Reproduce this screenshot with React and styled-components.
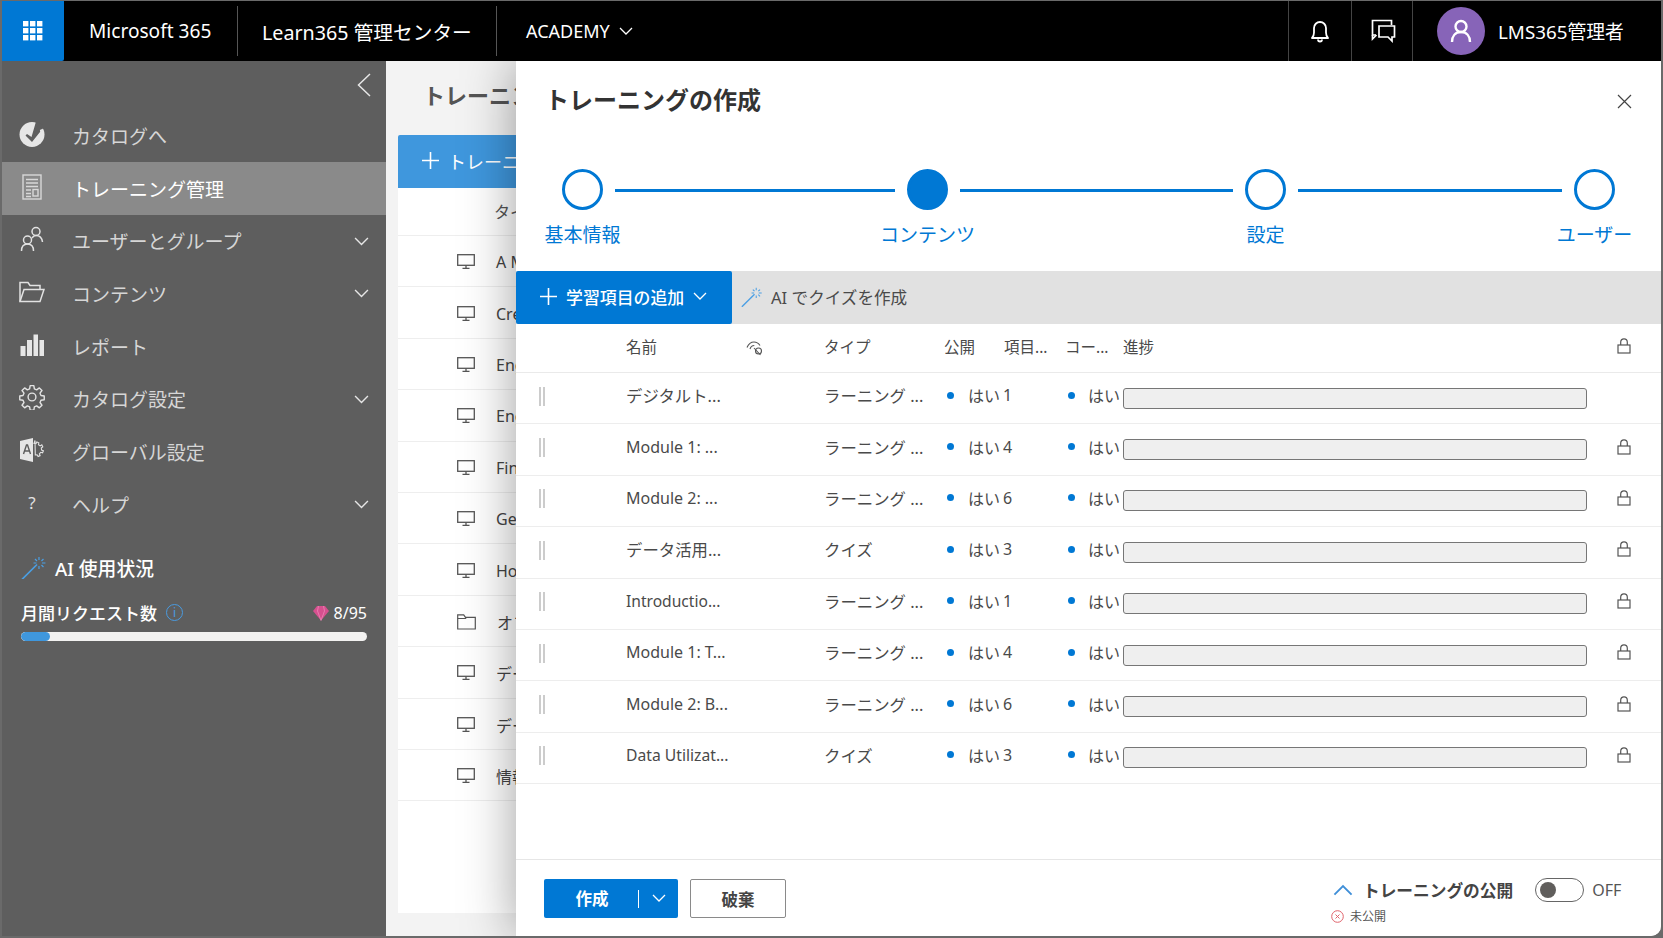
import React from "react";
import styled, { createGlobalStyle } from "styled-components";

const FONT = `"Noto Sans", "Noto Sans CJK JP", sans-serif`;

const Global = createGlobalStyle`
  html, body { margin: 0; padding: 0; height: 100%; background: #6a6a6a; overflow: hidden; }
  body { font-family: ${FONT}; }
  * { box-sizing: border-box; }
`;

const Page = styled.div`
  height: 938px;
  padding: 1px 2px 2px 2px;
  display: flex;
`;
const Win = styled.div`
  flex: 1;
  display: flex;
  flex-direction: column;
  overflow: hidden;
  border-bottom-right-radius: 10px;
  background: #f3f3f3;
`;

/* ---------- top bar ---------- */
const TopBar = styled.header`
  height: 60px;
  flex: none;
  background: #000;
  color: #fff;
  display: flex;
  align-items: stretch;
  position: relative;
  z-index: 3;
`;
const Waffle = styled.div`
  width: 62px;
  background: #0078d4;
  display: flex;
  align-items: center;
  justify-content: center;
  border-radius: 0 0 2px 0;
`;
const Brand = styled.div`
  display: flex;
  align-items: center;
  height: 50px;
  margin-top: 5px;
  font-size: ${(p) => p.$fs}px;
  white-space: nowrap;
  width: ${(p) => p.$w}px;
  padding-left: ${(p) => p.$pl}px;
  border-right: ${(p) => (p.$sep ? "1px solid #555" : "none")};
  gap: 9px;
`;
const Spring = styled.div`flex: 1;`;
const TopBtn = styled.div`
  width: ${(p) => p.$w}px;
  display: flex;
  align-items: center;
  justify-content: center;
  border-left: 1px solid #444;
`;
const UserBox = styled.div`
  width: 249px;
  border-left: 1px solid #444;
  display: flex;
  align-items: center;
  padding-left: 24px;
  gap: 13px;
  font-size: 18.8px;
  white-space: nowrap;
`;
const Avatar = styled.div`
  width: 48px;
  height: 48px;
  border-radius: 50%;
  background: #8764b8;
  display: flex;
  align-items: center;
  justify-content: center;
`;

/* ---------- body ---------- */
const Body = styled.div`
  flex: 1;
  display: flex;
  min-height: 0;
`;
const Sidebar = styled.nav`
  width: 384px;
  flex: none;
  background: #5e5e5e;
  color: #d6d6d6;
`;
const CollapseRow = styled.div`
  height: 48.5px;
  display: flex;
  justify-content: flex-end;
  align-items: center;
  padding: 0 15px 0 0;
`;
const NavItem = styled.div`
  height: 52.7px;
  display: flex;
  align-items: center;
  padding: 0 17px 0 17px;
  font-size: 19px;
  background: ${(p) => (p.$active ? "#8a8a8a" : "transparent")};
  color: ${(p) => (p.$active ? "#fff" : "#d6d6d6")};
`;
const NavIcon = styled.span`
  width: 26px;
  height: 28px;
  display: flex;
  align-items: center;
  justify-content: center;
  margin: 0 27px 4px 0;
  flex: none;
  color: #e2e2e2;
  font-size: 17px;
`;
const NavLabel = styled.span`flex: 1;`;
const AiBox = styled.div`
  padding: 22.500px 19px 0 19px;
  color: #fff;
`;
const AiTitle = styled.div`
  display: flex;
  align-items: center;
  gap: 8px;
  font-size: 18.8px;
  font-weight: 500;
  height: 28px;
`;
const ReqRow = styled.div`
  display: flex;
  align-items: center;
  margin-top: 19px;
  font-size: 17px;
  font-weight: 500;
  height: 24px;
`;
const InfoDot = styled.span`
  width: 17px;
  height: 17px;
  margin-left: 9px;
  border: 1.3px solid #4a9be0;
  color: #4a9be0;
  border-radius: 50%;
  font-size: 12px;
  line-height: 15px;
  text-align: center;
  font-weight: 400;
`;
const ReqCount = styled.span`
  margin-left: auto;
  display: flex;
  align-items: center;
  gap: 5px;
  font-size: 16px;
  font-weight: 400;
`;
const UsageTrack = styled.div`
  margin-top: 7px;
  height: 9px;
  width: 346px;
  background: #f3f2f1;
  border-radius: 5px;
  overflow: hidden;
`;
const UsageFill = styled.div`
  height: 100%;
  background: #3f97dd;
  border-radius: 5px;
`;

/* ---------- background list ---------- */
const Main = styled.main`
  flex: 1;
  position: relative;
  overflow: hidden;
  padding: 0 0 23px 12px;
  display: flex;
  flex-direction: column;
`;
const MainTitle = styled.div`
  height: 74px;
  padding: 19px 0 0 25px;
  line-height: 30px;
  font-size: 22px;
  font-weight: 600;
  color: #555;
  white-space: nowrap;
`;
const AddTraining = styled.div`
  height: 53px;
  flex: none;
  width: 300px;
  background: #3f97dd;
  color: #fff;
  border-radius: 2px 0 0 0;
  display: flex;
  align-items: center;
  padding: 0 0 2px 24px;
  gap: 9px;
  font-size: 18px;
`;
const Card = styled.div`
  flex: 1;
  background: #fff;
`;
const CardHead = styled.div`
  height: 48px;
  border-bottom: 1px solid #eee;
  padding: 0 0 2px 96px;
  display: flex;
  align-items: center;
  font-size: 16px;
  color: #555;
`;
const CardRow = styled.div`
  height: 51.4px;
  border-bottom: 1px solid #eee;
  display: flex;
  align-items: center;
  padding: 2px 0 0 59px;
  gap: 21px;
  font-size: 16px;
  color: #444;
  white-space: nowrap;
`;

/* ---------- panel ---------- */
const Panel = styled.section`
  position: absolute;
  top: 0;
  right: 0;
  bottom: 0;
  left: 130px;
  background: #fff;
  box-shadow: 0 0 50px rgba(0, 0, 0, 0.38);
  display: flex;
  flex-direction: column;
  color: #444;
`;
const PanelHead = styled.div`
  height: 108px;
  flex: none;
  padding: 24px 29px 0;
  display: flex;
  justify-content: space-between;
  align-items: flex-start;
`;
const PanelTitle = styled.h1`
  margin: 0;
  font-size: 24px;
  line-height: 30px;
  font-weight: 600;
  color: #333;
`;
const CloseBtn = styled.span`
  margin-top: 9px;
  display: flex;
`;
const Stepper = styled.div`
  height: 102px;
  flex: none;
  display: flex;
  align-items: flex-start;
  padding-left: 46px;
  color: #0078d4;
`;
const Step = styled.div`
  width: 41px;
  display: flex;
  flex-direction: column;
  align-items: center;
  flex: none;
`;
const Circle = styled.div`
  width: 41px;
  height: 41px;
  flex: none;
  border-radius: 50%;
  border: 3px solid #0078d4;
  background: ${(p) => (p.$on ? "#0078d4" : "#fff")};
`;
const StepLabel = styled.div`
  margin-top: 12px;
  font-size: 19px;
  line-height: 26px;
  white-space: nowrap;
`;
const StepLine = styled.div`
  height: 3px;
  flex: none;
  width: ${(p) => p.$w}px;
  margin: 20px 12px 0;
  background: #0078d4;
`;
const Toolbar = styled.div`
  height: 53px;
  flex: none;
  background: #e1e1e1;
  display: flex;
  align-items: center;
  font-size: 16.6px;
`;
const AddBtn = styled.div`
  width: 216px;
  height: 100%;
  background: #0078d4;
  color: #fff;
  border-radius: 2px;
  display: flex;
  align-items: center;
  padding: 0 0 2px 24px;
  gap: 9px;
  font-size: 16.9px;
  font-weight: 500;
  white-space: nowrap;
`;
const AiBtn = styled.div`
  display: flex;
  align-items: center;
  margin-left: 9px;
  padding-bottom: 1px;
  gap: 8px;
  color: #4a4a4a;
`;

const COLS = "110px 120px 78px 120px 56px 65px 58px 464px 1fr";
const HeadRow = styled.div`
  height: 49px;
  flex: none;
  display: grid;
  grid-template-columns: ${COLS};
  align-items: center;
  border-bottom: 1px solid #eaeaea;
  font-size: 15.5px;
  color: #4a4a4a;
  white-space: nowrap;
  padding-bottom: 3px;
`;
const Row = styled.div`
  height: 51.4px;
  flex: none;
  display: grid;
  grid-template-columns: ${COLS};
  align-items: center;
  border-bottom: 1px solid #ededed;
  font-size: 16px;
  color: #4a4a4a;
  white-space: nowrap;
`;
const Cell = styled.div`
  min-width: 0;
  padding-bottom: 6px;
  padding-left: ${(p) => p.$pl || 0}px;
  font-size: ${(p) => (p.$fs ? `${p.$fs}px` : "inherit")};
  display: flex;
  align-items: center;
`;
const HeadCell = styled.span`
  padding-left: ${(p) => p.$pl || 0}px;
`;
const HeadIcon = styled.span`
  display: flex;
  padding-top: 2px;
`;
const Handle = styled.div`
  margin-left: 23px;
  width: 6px;
  height: 19px;
  margin-bottom: 4px;
  border-left: 2px solid #ccc;
  border-right: 2px solid #ccc;
`;
const Dot = styled.span`
  width: 7px;
  height: 7px;
  flex: none;
  border-radius: 50%;
  background: #0078d4;
  margin-right: ${(p) => p.$mr}px;
`;
const Bar = styled.div`
  height: 21px;
  border: 1px solid #767676;
  border-radius: 3px;
  background: #efefef;
`;
const LockCell = styled.div`
  display: flex;
  justify-content: flex-start;
  padding-left: 30px;
  padding-bottom: ${(p) => p.$pb}px;
  color: #555;
`;
const Footer = styled.footer`
  margin-top: auto;
  height: 77px;
  flex: none;
  border-top: 1px solid #e6e6e6;
  padding: 19px 0 0 28px;
  display: flex;
  align-items: flex-start;
`;
const CreateBtn = styled.div`
  width: 134px;
  height: 39px;
  background: #0078d4;
  color: #fff;
  border-radius: 2px;
  display: grid;
  grid-template-columns: 95px 1fr;
  align-items: center;
  font-size: 16.5px;
  font-weight: 700;
`;
const CreateText = styled.span`
  height: 18px;
  line-height: 18px;
  text-align: center;
  padding-left: 2px;
  border-right: 1px solid #fff;
  font-weight: 700;
`;
const CreateChevron = styled.span`
  display: flex;
  justify-content: center;
`;
const DiscardBtn = styled.div`
  width: 96px;
  height: 39px;
  margin-left: 12px;
  border: 1px solid #8a8a8a;
  border-radius: 2px;
  display: flex;
  align-items: center;
  justify-content: center;
  font-size: 16.5px;
  font-weight: 700;
  color: #444;
`;
const Publish = styled.div`
  margin-left: auto;
  width: 328px;
  display: flex;
  flex-direction: column;
  flex: none;
`;
const PublishRow = styled.div`
  display: flex;
  align-items: center;
  height: 24px;
  margin-top: -1px;
`;
const PublishTitle = styled.span`
  font-size: 16.7px;
  font-weight: 700;
  color: #444;
  margin-left: 10px;
  white-space: nowrap;
`;
const Toggle = styled.div`
  width: 49px;
  height: 24px;
  border: 1px solid #666;
  border-radius: 12px;
  margin-left: 22px;
  padding: 3px 4px;
`;
const Knob = styled.div`
  width: 16px;
  height: 16px;
  border-radius: 50%;
  background: #605e5c;
`;
const OffText = styled.span`
  margin-left: 8px;
  font-size: 16px;
  color: #555;
`;
const StatusRow = styled.div`
  display: flex;
  align-items: center;
  gap: 6px;
  margin-top: 5px;
  margin-left: -2px;
  font-size: 12px;
  color: #555;
`;

/* ---------- icons ---------- */
const Chevron = ({ size = 14, color = "currentColor", up, sw = 1.3 }) => (
  <svg width={size} height={size * 0.6} viewBox="0 0 14 8" fill="none" stroke={color} strokeWidth={sw}>
    <path d={up ? "M1 7.3 7 1.3l6 6" : "M1 .8l6 6 6-6"} />
  </svg>
);
const WaffleIcon = () => (
  <svg width="20" height="20" viewBox="0 0 20 20" fill="#fff">
    {[0, 7, 14].flatMap((y) =>
      [0, 7, 14].map((x) => <rect key={`${x}${y}`} x={x} y={y} width="5.4" height="5.4" />)
    )}
  </svg>
);
const Bell = () => (
  <svg width="22" height="24" viewBox="0 0 22 24" fill="none" stroke="#fff" strokeWidth="1.8">
    <path d="M3 19c1.6-1.6 2-3 2-5.5V9a6 6 0 0 1 12 0v4.5c0 2.500.4 3.900 2 5.500H3z" strokeLinejoin="round" />
    <path d="M9 20.500a2 2 0 0 0 4 0" />
  </svg>
);
const Chat = () => (
  <svg width="27" height="24" viewBox="0 0 27 24" fill="none" stroke="#fff" strokeWidth="1.7">
    <path d="M7 16H3.500V1.500h19V6" />
    <path d="M3.500 16v4l4-4" />
    <path d="M10 7h15.500v11H23v4l-4-4h-9z" />
  </svg>
);
const UserIcon = () => (
  <svg width="24" height="26" viewBox="0 0 24 26" fill="none" stroke="#fff" strokeWidth="2.4">
    <circle cx="12" cy="8.500" r="5.500" />
    <path d="M3 24c0-6 3.500-10 9-10s9 4 9 10" />
  </svg>
);
const CatalogIcon = () => (
  <svg width="26" height="26" viewBox="0 0 26 26">
    <circle cx="13" cy="13.500" r="12.500" fill="#e6e6e6" />
    <path d="M17 .5c3 .8 6 2.800 8 5.500L13 21l-6.500-6.500 1.500-1.500 4.500 3z" fill="#5e5e5e" />
    <path d="M7.500 14.500l4.500 3.500 9-12" fill="none" stroke="#e6e6e6" strokeWidth="0" />
    <path d="M22 8.500c1.500 4 1.200 8-1 11" fill="none" stroke="#e6e6e6" strokeWidth="2.500" />
  </svg>
);
const DocIcon = () => (
  <svg width="20" height="26" viewBox="0 0 20 26" fill="none" stroke="#d8d8d8" strokeWidth="1.400">
    <rect x="1" y="1" width="18" height="24" />
    <path d="M4 5.500h12M4 9h12M4 12.500h12M4 16h5M4 19.500h5M4 22.500h5" />
    <rect x="11" y="15.500" width="5" height="6.500" />
  </svg>
);
const UsersIcon = () => (
  <svg width="24" height="26" viewBox="0 0 24 26" fill="none" stroke="#e2e2e2" strokeWidth="1.500">
    <circle cx="16" cy="5.500" r="4" />
    <path d="M12 12c.8-1.300 2.200-2.500 4-2.500 3.500 0 6 2.800 6.500 6.500" />
    <circle cx="7.500" cy="14" r="4" />
    <path d="M1.500 25c0-4.500 2.500-7 6-7s6 2.500 6 7" />
  </svg>
);
const FolderOpenIcon = () => (
  <svg width="26" height="22" viewBox="0 0 26 22" fill="none" stroke="#e2e2e2" strokeWidth="1.500">
    <path d="M1 20.500V1.500h8l2 3h10v4" />
    <path d="M1 20.500 5 8.500h20l-4 12z" />
  </svg>
);
const BarsIcon = () => (
  <svg width="24" height="22" viewBox="0 0 24 22" fill="#e6e6e6">
    <rect x="0.500" y="12" width="5" height="10" />
    <rect x="7" y="6" width="5" height="16" />
    <rect x="13.500" y="0.500" width="4.500" height="21.500" />
    <rect x="19.500" y="6" width="4.500" height="16" />
  </svg>
);
const GearIcon = () => (
  <svg width="26" height="26" viewBox="0 0 24 24" fill="none" stroke="#e2e2e2" strokeWidth="1.300" strokeLinejoin="round">
    <path d="M10.300 1.500h3.400l.5 3 2.100.9 2.500-1.800 2.400 2.400-1.800 2.500.9 2.100 3 .5v3.400l-3 .5-.9 2.100 1.800 2.500-2.400 2.400-2.500-1.800-2.100.9-.5 3h-3.400l-.5-3-2.100-.9-2.500 1.800-2.400-2.400 1.800-2.500-.9-2.100-3-.5v-3.400l3-.5.9-2.100-1.800-2.500 2.400-2.400 2.500 1.800 2.100-.9z" />
    <circle cx="12" cy="12" r="3.600" />
  </svg>
);
const GlobalIcon = () => (
  <svg width="26" height="26" viewBox="0 0 26 26">
    <path d="M1 4 14 1v24L1 22z" fill="#e6e6e6" />
    <path d="M4.500 17 7.500 8h1l3 9M5.600 14h4.800" fill="none" stroke="#5e5e5e" strokeWidth="1.400" />
    <path d="M15 6.500l2 .2.800-1.700 2 .8-.3 1.900 1.700 1.200 1.600-1 1 1.900-1.500 1.200.3 2 1.800.8-.8 2-1.900-.5-1.300 1.500.7 1.800-2 .9-1-1.700-1.800.2-.3-14.500z" fill="none" stroke="#e2e2e2" strokeWidth="1.100" />
  </svg>
);
const Wand = ({ w = 26, color = "#4a9fe4" }) => (
  <svg width={w} height={w * 0.92} viewBox="0 0 26 24" fill="none" stroke={color} strokeWidth="1.300">
    <path d="M1 23.500 16 8.500" strokeWidth="1.600" />
    <path d="M18 1v3M18 10v3M12.500 7h3M21 7h3.500M14 3l2 2M22.500 3l-2 2M22.500 11l-2-2" strokeWidth="1.200" />
  </svg>
);
const Diamond = () => (
  <svg width="16" height="16" viewBox="0 0 16 16">
    <path d="M4 1h8l4 5-8 9.500L0 6z" fill="#d6508f" />
    <path d="M5.500 1 4.500 6l3.500 9.500L11.500 6l-1-5" fill="none" stroke="#ee8fbc" strokeWidth=".7" />
  </svg>
);
const Monitor = () => (
  <svg width="18" height="16" viewBox="0 0 18 16" fill="none" stroke="#555" strokeWidth="1.300">
    <rect x=".7" y=".7" width="16.600" height="10.600" />
    <path d="M9 11.500v2.500M5.500 14.300h7" />
  </svg>
);
const FolderIcon = () => (
  <svg width="19" height="16" viewBox="0 0 19 16" fill="none" stroke="#555" strokeWidth="1.200">
    <path d="M.7 15V.8h6l1.800 2.500h9.800V15z" />
    <path d="M.7 4.500h7.800l1-1.200" />
  </svg>
);
const Plus = ({ size = 17, color = "#fff" }) => (
  <svg width={size} height={size} viewBox="0 0 17 17" stroke={color} strokeWidth="1.600">
    <path d="M8.500 0v17M0 8.500h17" />
  </svg>
);
const Lock = () => (
  <svg width="14" height="16" viewBox="0 0 14 16" fill="none" stroke="#555" strokeWidth="1.200">
    <rect x="1" y="7" width="12" height="8" />
    <path d="M3.700 7V4.200a3.300 3.300 0 0 1 6.600 0V7" />
  </svg>
);
const EyeOff = () => (
  <svg width="17" height="16" viewBox="0 0 17 16" fill="none" stroke="#555" strokeWidth="1.100">
    <path d="M1 7.500C2.500 4 5 2 8 2c2.500 0 4.500 1.300 6 3.500" />
    <path d="M4 9c.6-2 2.300-3.500 4.300-3.500" />
    <path d="M8 8l6.500 7" />
    <circle cx="12.500" cy="11" r="3" />
  </svg>
);
const XCircle = () => (
  <svg width="13" height="13" viewBox="0 0 13 13" fill="none" stroke="#e0636c" strokeWidth="1">
    <circle cx="6.500" cy="6.500" r="5.800" />
    <path d="M4.500 4.500l4 4M8.500 4.500l-4 4" />
  </svg>
);

const NAV = [
  { t: "カタログへ", i: <CatalogIcon /> },
  { t: "トレーニング管理", i: <DocIcon />, active: true },
  { t: "ユーザーとグループ", i: <UsersIcon />, c: true },
  { t: "コンテンツ", i: <FolderOpenIcon />, c: true },
  { t: "レポート", i: <BarsIcon /> },
  { t: "カタログ設定", i: <GearIcon />, c: true },
  { t: "グローバル設定", i: <GlobalIcon /> },
  { t: "ヘルプ", i: "?", c: true },
];
const BG = [
  ["A Modern", 0], ["Create", 0], ["English", 0], ["English", 0], ["Finance", 0], ["General", 0],
  ["How to", 0], ["オフィス", 1], ["データ", 0], ["データ", 0], ["情報", 0],
];
const ROWS = [
  ["デジタルト...", "ラーニング ...", 1, false, 16.4],
  ["Module 1: ...", "ラーニング ...", 4, true],
  ["Module 2: ...", "ラーニング ...", 6, true],
  ["データ活用...", "クイズ", 3, true, 16.4],
  ["Introductio...", "ラーニング ...", 1, true, 15.6],
  ["Module 1: T...", "ラーニング ...", 4, true],
  ["Module 2: B...", "ラーニング ...", 6, true],
  ["Data Utilizat...", "クイズ", 3, true, 15.7],
];
const STEPS = [
  ["基本情報", false, 280],
  ["コンテンツ", true, 273],
  ["設定", false, 264],
  ["ユーザー", false, 0],
];

export default function App() {
  return (
    <Page>
      <Global />
      <Win>
        <TopBar>
          <Waffle><WaffleIcon /></Waffle>
          <Brand $w={174} $pl={25} $fs={19.1} $sep>Microsoft 365</Brand>
          <Brand $w={259} $pl={24} $fs={19.7} $sep>Learn365 管理センター</Brand>
          <Brand $w={200} $pl={29} $fs={18}>ACADEMY <Chevron size={14} color="#fff" /></Brand>
          <Spring />
          <TopBtn $w={63}><Bell /></TopBtn>
          <TopBtn $w={61}><Chat /></TopBtn>
          <UserBox>
            <Avatar><UserIcon /></Avatar>
            LMS365管理者
          </UserBox>
        </TopBar>
        <Body>
          <Sidebar>
            <CollapseRow>
              <svg width="14" height="24" viewBox="0 0 14 24" fill="none" stroke="#e6e6e6" strokeWidth="1.500">
                <path d="M13 1 1.500 12 13 23" />
              </svg>
            </CollapseRow>
            {NAV.map((n) => (
              <NavItem key={n.t} $active={n.active}>
                <NavIcon>{n.i}</NavIcon>
                <NavLabel>{n.t}</NavLabel>
                {n.c && <Chevron size={15} color="#e6e6e6" />}
              </NavItem>
            ))}
            <AiBox>
              <AiTitle><Wand />AI 使用状況</AiTitle>
              <ReqRow>
                月間リクエスト数
                <InfoDot>i</InfoDot>
                <ReqCount><Diamond />8/95</ReqCount>
              </ReqRow>
              <UsageTrack><UsageFill style={{ width: `${(8 / 95) * 100}%` }} /></UsageTrack>
            </AiBox>
          </Sidebar>
          <Main>
            <MainTitle>トレーニング</MainTitle>
            <AddTraining><Plus />トレーニング</AddTraining>
            <Card>
              <CardHead>タイプ</CardHead>
              {BG.map(([t, f], i) => (
                <CardRow key={i}>
                  {f ? <FolderIcon /> : <Monitor />}
                  {t}
                </CardRow>
              ))}
            </Card>
            <Panel>
              <PanelHead>
                <PanelTitle>トレーニングの作成</PanelTitle>
                <CloseBtn>
                  <svg width="15" height="15" viewBox="0 0 15 15" stroke="#444" strokeWidth="1.200">
                    <path d="M1 1l13 13M14 1 1 14" />
                  </svg>
                </CloseBtn>
              </PanelHead>
              <Stepper>
                {STEPS.map(([t, on, w]) => (
                  <React.Fragment key={t}>
                    <Step>
                      <Circle $on={on} />
                      <StepLabel>{t}</StepLabel>
                    </Step>
                    {w > 0 && <StepLine $w={w} />}
                  </React.Fragment>
                ))}
              </Stepper>
              <Toolbar>
                <AddBtn><Plus />学習項目の追加<Chevron size={14} color="#fff" /></AddBtn>
                <AiBtn><Wand w={22} />AI でクイズを作成</AiBtn>
              </Toolbar>
              <HeadRow>
                <span />
                <span>名前</span>
                <HeadIcon><EyeOff /></HeadIcon>
                <span>タイプ</span>
                <span>公開</span>
                <HeadCell $pl={4}>項目...</HeadCell>
                <HeadCell>コー...</HeadCell>
                <span>進捗</span>
                <LockCell $pb={1}><Lock /></LockCell>
              </HeadRow>
              {ROWS.map(([name, type, n, lock, fs], i) => (
                <Row key={i}>
                  <Handle />
                  <Cell $fs={fs}>{name}</Cell>
                  <span />
                  <Cell $fs={16.4}>{type}</Cell>
                  <Cell $pl={3}><Dot $mr={14} />はい</Cell>
                  <Cell $pl={3}>{n}</Cell>
                  <Cell $pl={3}><Dot $mr={13} />はい</Cell>
                  <Bar />
                  {lock ? <LockCell $pb={6}><Lock /></LockCell> : <span />}
                </Row>
              ))}
              <Footer>
                <CreateBtn>
                  <CreateText>作成</CreateText>
                  <CreateChevron><Chevron size={14} color="#fff" /></CreateChevron>
                </CreateBtn>
                <DiscardBtn>破棄</DiscardBtn>
                <Publish>
                  <PublishRow>
                    <Chevron size={20} color="#3f8fd8" up />
                    <PublishTitle>トレーニングの公開</PublishTitle>
                    <Toggle><Knob /></Toggle>
                    <OffText>OFF</OffText>
                  </PublishRow>
                  <StatusRow><XCircle />未公開</StatusRow>
                </Publish>
              </Footer>
            </Panel>
          </Main>
        </Body>
      </Win>
    </Page>
  );
}
